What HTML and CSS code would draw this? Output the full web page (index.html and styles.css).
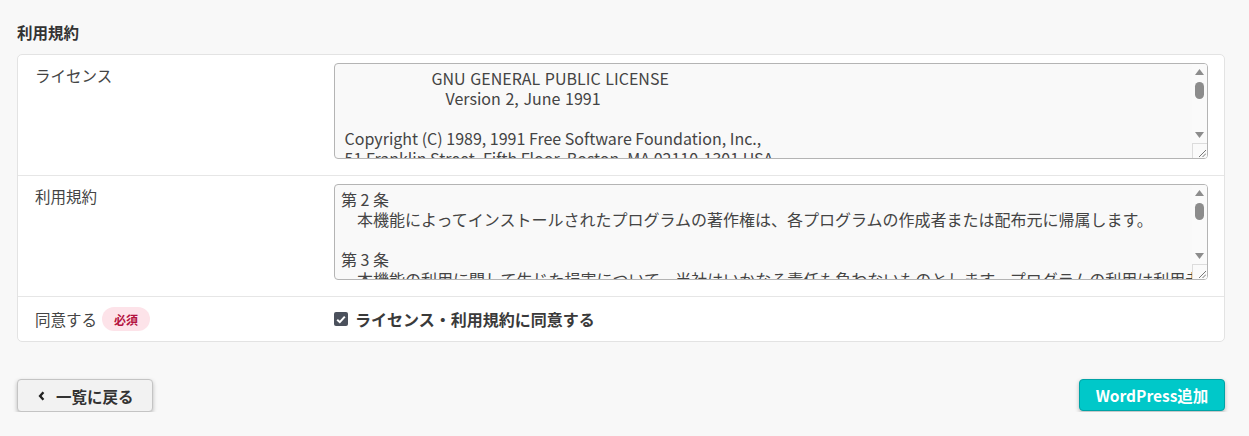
FILE: index.html
```html
<!DOCTYPE html>
<html lang="ja">
<head>
<meta charset="utf-8">
<title>利用規約</title>
<link rel="stylesheet" href="styles.css">
</head>
<body>
<div class="page">
  <h2 class="section-title">利用規約</h2>
  <div class="card">
    <div class="row">
      <div class="label">ライセンス</div>
      <div class="field">
        <div class="textbox">
          <div class="tb-text"><span class="wide">		    GNU GENERAL PUBLIC LICENSE</span>
<span class="wide">		       Version 2, June 1991</span>

 Copyright (C) 1989, 1991 Free Software Foundation, Inc.,
 51 Franklin Street, Fifth Floor, Boston, MA 02110-1301 USA
 Everyone is permitted to copy and distribute verbatim copies
 of this license document, but changing it is not allowed.</div>
          <div class="tb-bar">
            <div class="sb-btn"><svg width="9" height="6" viewBox="0 0 9 6"><path d="M0 6 L4.5 0 L9 6 Z" fill="#8c8c8c"/></svg></div>
            <div class="sb-track"><div class="sb-thumb"></div></div>
            <div class="sb-btn"><svg width="9" height="6" viewBox="0 0 9 6"><path d="M0 0 L9 0 L4.5 6 Z" fill="#8c8c8c"/></svg></div>
            <div class="resizer"><svg width="8" height="8" viewBox="0 0 8 8"><path d="M1 8 L8 1 M4.5 8 L8 4.5" stroke="#777" stroke-width="1"/></svg></div>
          </div>
        </div>
      </div>
    </div>
    <div class="row">
      <div class="label">利用規約</div>
      <div class="field">
        <div class="textbox">
          <div class="tb-text">第 2 条
　本機能によってインストールされたプログラムの著作権は、各プログラムの作成者または配布元に帰属します。

第 3 条
　本機能の利用に関して生じた損害について、当社はいかなる責任も負わないものとします。プログラムの利用は利用者の責任で行ってください。</div>
          <div class="tb-bar">
            <div class="sb-btn"><svg width="9" height="6" viewBox="0 0 9 6"><path d="M0 6 L4.5 0 L9 6 Z" fill="#8c8c8c"/></svg></div>
            <div class="sb-track"><div class="sb-thumb"></div></div>
            <div class="sb-btn"><svg width="9" height="6" viewBox="0 0 9 6"><path d="M0 0 L9 0 L4.5 6 Z" fill="#8c8c8c"/></svg></div>
            <div class="resizer"><svg width="8" height="8" viewBox="0 0 8 8"><path d="M1 8 L8 1 M4.5 8 L8 4.5" stroke="#777" stroke-width="1"/></svg></div>
          </div>
        </div>
      </div>
    </div>
    <div class="row row-agree">
      <div class="label">同意する<span class="badge">必須</span></div>
      <div class="field">
        <label class="check-label"><span class="check"><svg width="10" height="9" viewBox="0 0 10 9"><path d="M1.2 4.8 L3.8 7.2 L8.8 1.6" fill="none" stroke="#fff" stroke-width="2"/></svg></span>ライセンス・利用規約に同意する</label>
      </div>
    </div>
  </div>
  <div class="actions">
    <button class="btn btn-back"><svg class="chev" width="7" height="10" viewBox="0 0 7 10"><path d="M5.4 1.3 L2.1 5 L5.4 8.7" fill="none" stroke="#222" stroke-width="2.4"/></svg>一覧に戻る</button>
    <button class="btn btn-primary">WordPress追加</button>
  </div>
</div>
</body>
</html>
```

FILE: styles.css
```css
html, body {
  margin: 0;
  background: #f8f8f8;
}
body {
  font-family: "Noto Sans CJK JP", "Noto Sans", sans-serif;
  color: #444;
}
.page {
  padding: 16px 24px 0 17px;
}
.section-title {
  margin: 0 0 6px;
  font-size: 15.5px;
  line-height: 32px;
  font-weight: bold;
  color: #333;
}
.card {
  background: #fff;
  border: 1px solid #e3e3e3;
  border-radius: 5px;
}
.row {
  display: grid;
  grid-template-columns: 299px minmax(0, 1fr);
  padding: 8px 16px 16px 17px;
}
.row + .row {
  border-top: 1px solid #e6e6e6;
}
.field {
  min-width: 0;
}
.label {
  font-size: 15.5px;
  line-height: 24px;
  color: #444;
  display: flex;
  align-items: center;
  align-self: start;
}
.textbox {
  display: flex;
  height: 96px;
  box-sizing: border-box;
  border: 1px solid #b4b4b4;
  border-radius: 4px;
  background: #f9f9f9;
  overflow: hidden;
}
.tb-text {
  flex: 1;
  min-width: 0;
  overflow: hidden;
  white-space: pre;
  padding: 4px 6px;
  font-size: 16px;
  line-height: 20px;
  color: #444;
  tab-size: 10;
}
.tb-text .wide {
  word-spacing: 1.1px;
}
.tb-bar {
  width: 15px;
  flex: none;
  display: flex;
  flex-direction: column;
  background: #fafafa;
}
.sb-btn {
  height: 16px;
  display: flex;
  align-items: center;
  justify-content: center;
}
.sb-track {
  flex: 1;
  display: flex;
  flex-direction: column;
  align-items: center;
  padding-top: 2px;
}
.sb-thumb {
  width: 9px;
  height: 17px;
  border-radius: 4.5px;
  background: #8c8c8c;
}
.resizer {
  height: 15px;
  box-sizing: border-box;
  border-top: 1px solid #dcdcdc;
  border-left: 1px solid #dcdcdc;
  background: #fafafa;
  display: flex;
  align-items: flex-end;
  justify-content: flex-end;
  padding: 0 1px 1px 0;
}
.resizer svg { display: block; }
.row-agree {
  padding: 10px 16px 10px 17px;
}
.row-agree .label,
.row-agree .field {
  line-height: 23px;
  align-self: center;
}
.badge {
  display: inline-flex;
  align-items: center;
  height: 24px;
  padding: 0 12px;
  margin-left: 5px;
  border-radius: 12px;
  background: #fde3e9;
  color: #b4123f;
  font-size: 12px;
  font-weight: bold;
}
.check-label {
  display: flex;
  align-items: center;
  font-size: 16px;
  font-weight: bold;
  color: #3a3a3a;
}
.check {
  width: 14px;
  height: 14px;
  border-radius: 2px;
  background: #4b515c;
  display: inline-flex;
  align-items: center;
  justify-content: center;
  margin-right: 7px;
}
.actions {
  display: flex;
  justify-content: space-between;
  margin-top: 37px;
}
.btn {
  font-family: inherit;
  font-size: 15.5px;
  font-weight: bold;
  height: 33px;
  border-radius: 4px;
  display: inline-flex;
  align-items: center;
  box-shadow: 0 2px 4px rgba(0, 0, 0, 0.25);
  cursor: pointer;
}
.btn-back {
  width: 136px;
  padding: 0 0 0 20px;
  background: #f2f2f2;
  border: 1px solid #c4c4c4;
  color: #333;
}
.chev {
  margin-right: 11px;
}
.btn-primary {
  width: 146px;
  justify-content: center;
  background: #00c8c9;
  border: 1px solid #00a3a6;
  color: #fff;
  height: 32px;
}
```
